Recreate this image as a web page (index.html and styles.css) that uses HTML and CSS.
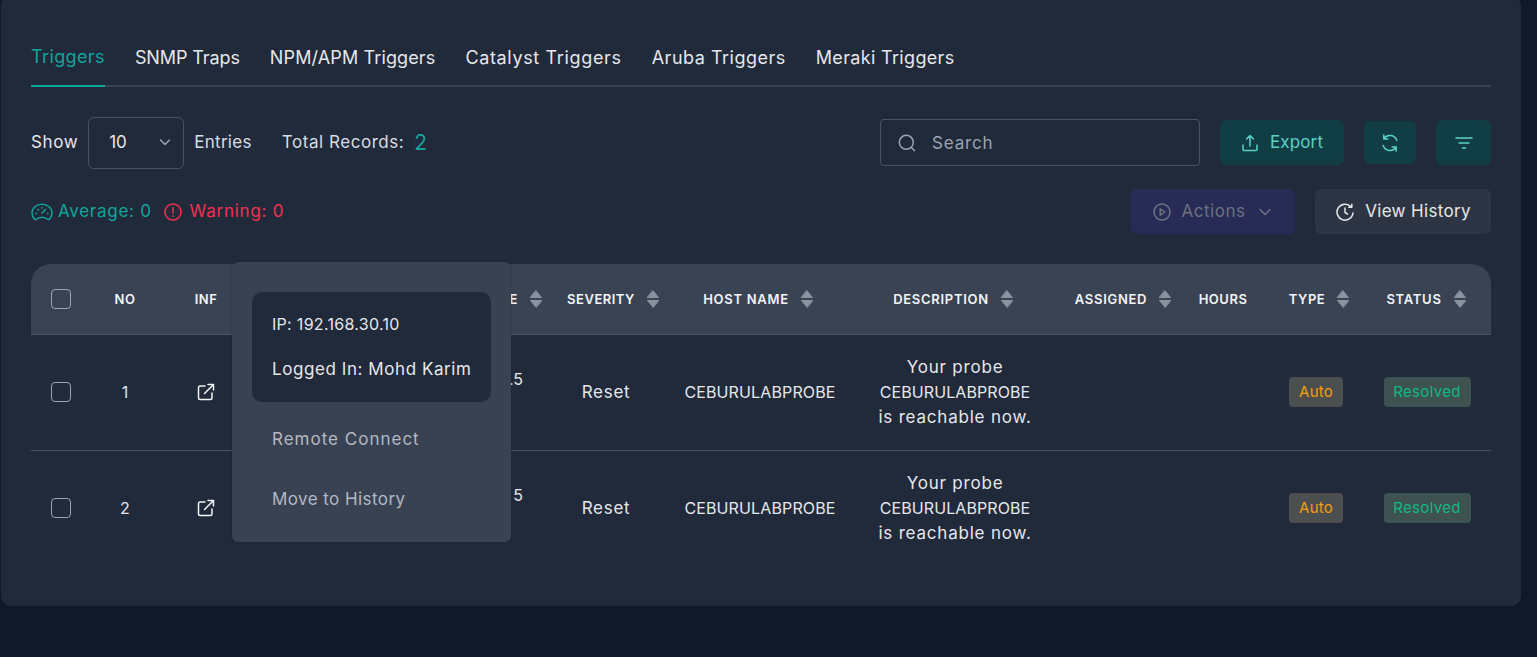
FILE: index.html
```html
<!DOCTYPE html>
<html lang="en">
<head>
<meta charset="utf-8">
<title>Triggers</title>
<link rel="stylesheet" href="styles.css">
</head>
<body>
<main class="card">
  <nav class="tabs">
    <a class="tab active t1">Triggers</a>
    <a class="tab t2">SNMP Traps</a>
    <a class="tab t3">NPM/APM Triggers</a>
    <a class="tab t4">Catalyst Triggers</a>
    <a class="tab t5">Aruba Triggers</a>
    <a class="tab t6">Meraki Triggers</a>
  </nav>

  <section class="controls">
    <div class="group">
      <span class="label show">Show</span>
      <div class="select"><span>10</span>
        <svg class="chev" viewBox="0 0 12 12"><path d="M1.5 4l4.500 4.500L10.500 4"/></svg>
      </div>
      <span class="label muted entries">Entries</span>
      <span class="label muted total">Total Records:</span>
      <span class="count">2</span>
    </div>
    <div class="group tools top">
      <div class="search">
        <svg class="ic18" viewBox="0 0 18 18"><circle cx="8.300" cy="8.300" r="7"/><path d="M13.500 13.500L16.500 16.800"/></svg>
        <span>Search</span>
      </div>
      <button class="btn teal export">
        <svg class="ic18" viewBox="0 0 18 18"><path d="M9 12V1.500M5.500 5L9 1.500 12.500 5M2 11v4.200a1.300 1.300 0 0 0 1.300 1.300h11.400a1.300 1.300 0 0 0 1.300-1.300V11"/></svg>
        <span>Export</span>
      </button>
      <button class="btn teal refresh">
        <svg class="ic18" viewBox="0 0 18 18"><path d="M15.800 6.500A7.300 7.300 0 0 0 3 4.500M2.200 11.500A7.300 7.300 0 0 0 15 13.500M2.800 1v4h4M15.200 17v-4h-4"/></svg>
      </button>
      <button class="btn teal filter">
        <svg class="ic18" viewBox="0 0 18 18"><path d="M1 4h16M4 9h10M7.500 14h3"/></svg>
      </button>
    </div>
  </section>

  <section class="controls second">
    <div class="group stats">
      <span class="stat avg">
        <svg class="ic22" viewBox="0 0 22 18"><path d="M5 16.500H3.800C2 14.800 1 12.500 1 10a10 8.800 0 0 1 20 0c0 2.500-1 4.800-2.800 6.500H17c-1.500-1.500-3.500-2.300-6-2.300s-4.500.8-6 2.300zM11 10l3.500-3.500M5 10.500h.5M16.500 10.500h.5M7 6.500l.4.400M11 4.500v.5"/></svg>
        <span>Average: 0</span>
      </span>
      <span class="stat warn">
        <svg class="ic18" viewBox="0 0 18 18"><circle cx="9" cy="9" r="8"/><path d="M9 4.800v5.200M9 12.800v.4"/></svg>
        <span>Warning: 0</span>
      </span>
    </div>
    <div class="group tools">
      <button class="btn actions">
        <svg class="ic18" viewBox="0 0 18 18"><circle cx="9" cy="9" r="8"/><path d="M7.200 5.800L12 9l-4.800 3.200z"/></svg>
        <span>Actions</span>
        <svg class="chev act" viewBox="0 0 12 12"><path d="M1 3.500l5 5 5-5"/></svg>
      </button>
      <button class="btn history">
        <svg class="ic18" viewBox="0 0 18 18"><path d="M15 3.800A8 8 0 1 0 17 10M15.800 1.200v3h-3M9 5v4.500l2.500 1.500"/></svg>
        <span>View History</span>
      </button>
    </div>
  </section>

  <div class="table-wrap">
    <table class="grid">
      <colgroup>
        <col class="c-check"><col class="c-no"><col class="c-inf"><col class="c-date"><col class="c-sev"><col class="c-host"><col class="c-desc"><col class="c-asg"><col class="c-hrs"><col class="c-type"><col class="c-stat">
      </colgroup>
      <thead>
        <tr>
          <th><span class="box"></span></th>
          <th>NO</th>
          <th>INF</th>
          <th class="th-date"><div class="hd">DATE<svg class="sort" viewBox="0 0 12 18"><path d="M6 .8L11.500 7.500H.5zM6 17.200L.5 10.500h11z"/></svg></div></th>
          <th class="th-sev"><div class="hd">SEVERITY<svg class="sort" viewBox="0 0 12 18"><path d="M6 .8L11.500 7.500H.5zM6 17.200L.5 10.500h11z"/></svg></div></th>
          <th class="th-shift wide"><div class="hd">HOST NAME<svg class="sort" viewBox="0 0 12 18"><path d="M6 .8L11.500 7.500H.5zM6 17.200L.5 10.500h11z"/></svg></div></th>
          <th class="th-shift wide"><div class="hd">DESCRIPTION<svg class="sort" viewBox="0 0 12 18"><path d="M6 .8L11.500 7.500H.5zM6 17.200L.5 10.500h11z"/></svg></div></th>
          <th class="th-asg wide"><div class="hd">ASSIGNED<svg class="sort" viewBox="0 0 12 18"><path d="M6 .8L11.500 7.500H.5zM6 17.200L.5 10.500h11z"/></svg></div></th>
          <th>HOURS</th>
          <th class="th-type"><div class="hd">TYPE<svg class="sort" viewBox="0 0 12 18"><path d="M6 .8L11.500 7.500H.5zM6 17.200L.5 10.500h11z"/></svg></div></th>
          <th class="th-shift wide"><div class="hd">STATUS<svg class="sort" viewBox="0 0 12 18"><path d="M6 .8L11.500 7.500H.5zM6 17.200L.5 10.500h11z"/></svg></div></th>
        </tr>
      </thead>
      <tbody>
        <tr>
          <td class="td-up"><span class="box"></span></td>
          <td class="td-up">1</td>
          <td class="td-up"><svg class="link" viewBox="0 0 18 18"><path d="M8 3H3a1.500 1.500 0 0 0-1.500 1.500v10.500A1.500 1.500 0 0 0 3 16.500h10.500A1.500 1.500 0 0 0 15 15v-5M7.500 10.500L16.500 1.500M11 1.500h5.500V7"/></svg></td>
          <td class="td-date">.5</td>
          <td class="td-up td-reset">Reset</td>
          <td class="td-up td-host">CEBURULABPROBE</td>
          <td class="td-desc"><span class="ln-a">Your probe</span> CEBURULABPROBE <span class="ln-b">is reachable now.</span></td>
          <td></td>
          <td></td>
          <td class="td-up"><span class="badge auto">Auto</span></td>
          <td class="td-up td-status"><span class="badge done">Resolved</span></td>
        </tr>
        <tr>
          <td class="td-up"><span class="box"></span></td>
          <td class="td-up">2</td>
          <td class="td-up"><svg class="link" viewBox="0 0 18 18"><path d="M8 3H3a1.500 1.500 0 0 0-1.500 1.500v10.500A1.500 1.500 0 0 0 3 16.500h10.500A1.500 1.500 0 0 0 15 15v-5M7.500 10.500L16.500 1.500M11 1.500h5.500V7"/></svg></td>
          <td class="td-date">5</td>
          <td class="td-up td-reset">Reset</td>
          <td class="td-up td-host">CEBURULABPROBE</td>
          <td class="td-desc"><span class="ln-a">Your probe</span> CEBURULABPROBE <span class="ln-b">is reachable now.</span></td>
          <td></td>
          <td></td>
          <td class="td-up"><span class="badge auto">Auto</span></td>
          <td class="td-up td-status"><span class="badge done">Resolved</span></td>
        </tr>
      </tbody>
    </table>

    <div class="menu">
      <div class="menu-info">
        <div class="m-ip">IP: 192.168.30.10</div>
        <div class="m-user">Logged In: Mohd Karim</div>
      </div>
      <a class="menu-item m-remote">Remote Connect</a>
      <a class="menu-item m-move">Move to History</a>
    </div>
  </div>
</main>
</body>
</html>
```
FILE: styles.css
```css
* { box-sizing: border-box; }
html, body { margin: 0; height: 100%; }
body {
  background: #111827;
  color: #e5e7eb;
  font-family: "Inter", "Noto Sans", sans-serif;
  font-size: 17px;
  overflow: hidden;
}
svg { fill: none; stroke: currentColor; stroke-width: 1.5; stroke-linecap: round; stroke-linejoin: round; flex: none; }
.ic18 { width: 18px; height: 18px; }
.ic22 { width: 22px; height: 18px; }

.card {
  width: 1520px;
  height: 610px;
  margin: -4px 0 0 1px;
  padding: 50px 30px 40px;
  background: #212a3a;
  border-radius: 10px;
}

.tabs { display: flex; gap: 30px; align-items: flex-end; height: 41px; border-bottom: 2px solid #3a4250; }
.tab { padding-bottom: 15px; margin-bottom: -2px; font-size: 18px; line-height: 24px; border-bottom: 2px solid transparent; color: #e5e7eb; white-space: nowrap; }
.tab.active { color: #12a59b; border-bottom-color: #0fa69c; padding-bottom: 16px; }
.t1 { letter-spacing: .38px; }
.t2 { letter-spacing: -.1px; }
.t3 { letter-spacing: .13px; }
.t4 { letter-spacing: .65px; }
.t5 { letter-spacing: .5px; }
.t6 { letter-spacing: .33px; }

.controls { display: flex; justify-content: space-between; align-items: center; height: 52px; margin-top: 30px; }
.controls.second { height: 45px; margin-top: 20px; }
.group { display: flex; align-items: center; }
.label { color: #e5e7eb; padding-bottom: 2px; }
.show { letter-spacing: .6px; }
.muted { color: #d8dce3; }
.entries { letter-spacing: .3px; }
.select { display: flex; align-items: center; justify-content: space-between; width: 96px; height: 52px; margin: 0 10px; padding: 0 12px 2px 20px; border: 1px solid #4b5361; border-radius: 6px; font-size: 17px; }
.chev { width: 12px; height: 12px; color: #9ca3af; }
.total { margin-left: 30px; letter-spacing: .55px; }
.count { margin-left: 10px; padding-bottom: 2px; color: #12a59b; font-size: 21px; }

.tools { gap: 20px; }
.tools.top { padding-bottom: 1px; }
.search { display: flex; align-items: center; gap: 16px; width: 320px; height: 47px; padding: 0 17px; border: 1px solid #4b5361; border-radius: 4px; color: #9ca3af; letter-spacing: .85px; }
.btn { display: flex; align-items: center; justify-content: center; border: 0; border-radius: 6px; font: inherit; height: 45px; padding: 0; }
.btn span { padding-bottom: 1px; }
.teal { background: #113d44; color: #5ad1c9; }
.export { width: 124px; gap: 11px; letter-spacing: .15px; }
.refresh { width: 52px; height: 43px; }
.filter { width: 55px; }
.actions { width: 164px; gap: 10px; padding-right: 2px; background: #272b55; color: #6b7280; letter-spacing: .55px; }
.chev.act { color: #6b7280; margin-left: 3px; }
.history { width: 176px; gap: 11px; padding-left: 1px; background: #2d3544; color: #e5e7eb; letter-spacing: .33px; }

.stats { gap: 12px; }
.stat { display: flex; align-items: center; gap: 5px; letter-spacing: .72px; }
.stat span { padding-bottom: 2px; }
.avg { color: #12a59b; }
.warn { color: #f2304f; gap: 8px; letter-spacing: .75px; }

.table-wrap { position: relative; margin-top: 30px; }
.grid { width: 1460px; table-layout: fixed; border-collapse: separate; border-spacing: 0; }
.c-check { width: 60px; }
.c-no { width: 68px; }
.c-inf { width: 94px; }
.c-date { width: 294px; }
.c-sev { width: 118px; }
.c-host { width: 190px; }
.c-desc { width: 200px; }
.c-asg { width: 124px; }
.c-hrs { width: 88px; }
.c-type { width: 98px; }
.c-stat { width: 126px; }

th { height: 71px; padding: 0; background: #3a4354; border-bottom: 1px solid #4b5361; font-size: 13px; font-weight: 600; letter-spacing: .5px; color: #f3f4f6; text-align: center; white-space: nowrap; }
th.wide { letter-spacing: .72px; }
th:first-child { border-top-left-radius: 20px; }
th:last-child { border-top-right-radius: 20px; }
td { height: 116px; padding: 0; text-align: center; border-bottom: 1px solid #4b5361; color: #e5e7eb; font-size: 16px; white-space: nowrap; }
tbody tr:last-child td { border-bottom: 0; height: 115px; }
.td-up { padding-bottom: 2px; }
.td-reset { font-size: 17px; letter-spacing: .7px; }
.td-host { letter-spacing: .14px; }
.td-status { padding-right: 2px; }
.hd { display: flex; align-items: center; justify-content: center; gap: 12px; }
.sort { width: 12px; height: 18px; fill: #8b92a0; stroke: #8b92a0; stroke-width: 1; }
.th-date .hd { justify-content: flex-end; padding-right: 5px; }
.th-sev { padding-left: 14px; }
.th-shift { padding-right: 4px; }
.th-asg { padding-left: 12px; }
.th-type { padding-left: 6px; }
.td-date { text-align: right; padding: 0 24px 28px 0; }
.td-desc { padding: 0 20px; white-space: normal; line-height: 25px; letter-spacing: .1px; }
.ln-a, .ln-b { font-size: 17px; letter-spacing: .8px; white-space: nowrap; }

.box { display: block; width: 20px; height: 20px; margin: 0 auto; border: 1px solid #9ca3af; border-radius: 4px; }
.link { display: block; width: 18px; height: 18px; margin: 0 auto; color: #f3f4f6; }
.badge { display: inline-block; height: 30px; line-height: 30px; border-radius: 4px; font-size: 15px; letter-spacing: .2px; }
.auto { width: 54px; background: #4c4f50; color: #f59e0b; }
.done { width: 87px; background: #3f5252; color: #10b981; letter-spacing: .35px; }

.menu { position: absolute; left: 201px; top: -2px; width: 279px; height: 280px; padding: 30px 20px 0; background: #394253; border-radius: 6px; box-shadow: 0 0 2px rgba(17, 24, 39, .5); }
.menu-info { display: flex; flex-direction: column; gap: 21px; height: 110px; padding: 20px; background: #212a3a; border-radius: 10px; color: #e5e7eb; white-space: nowrap; }
.menu-info div { line-height: 24px; }
.m-ip { font-size: 16px; letter-spacing: .3px; }
.m-user { letter-spacing: .57px; }
.menu-item { display: block; padding-left: 20px; line-height: 24px; color: #b3b8c2; }
.m-remote { margin-top: 25px; letter-spacing: 1px; }
.m-move { margin-top: 36px; letter-spacing: .43px; }
```
